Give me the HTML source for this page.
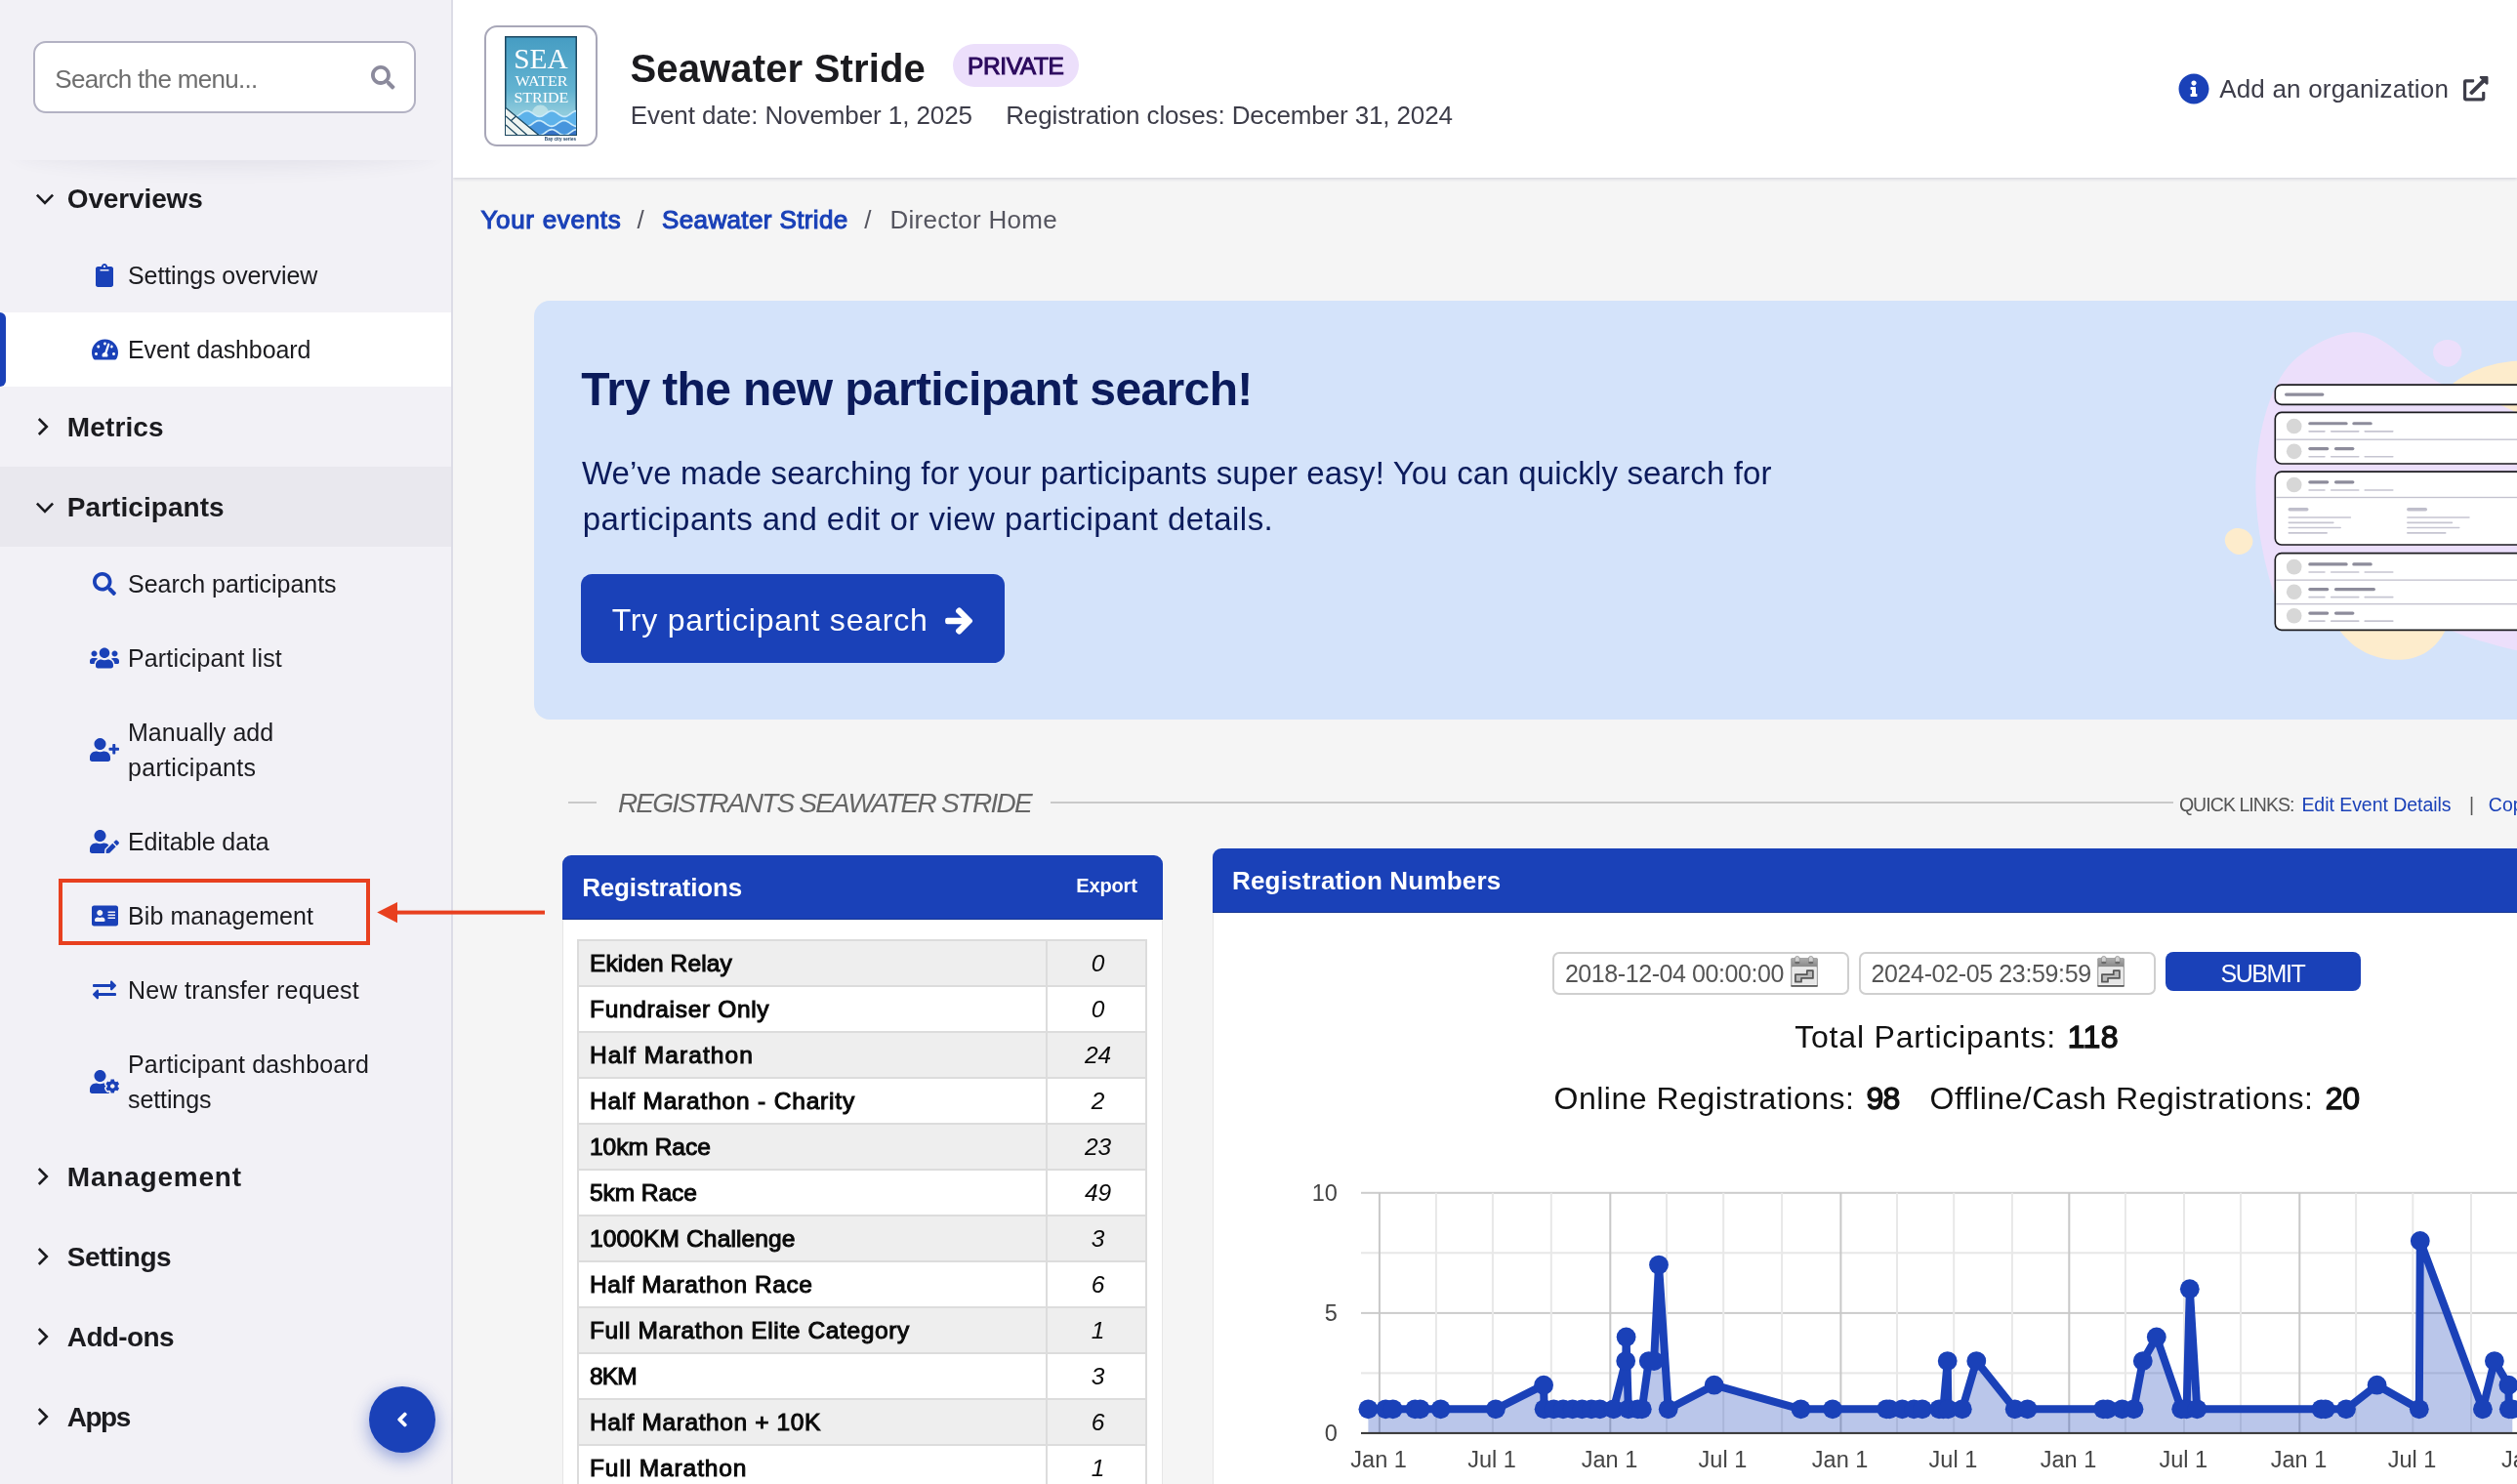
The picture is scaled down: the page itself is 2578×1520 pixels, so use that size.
<!DOCTYPE html><html lang="en"><head><meta charset="utf-8"><title>Seawater Stride - Director Home</title>
<style>
*{box-sizing:border-box;margin:0;padding:0}
html,body{width:2578px;height:1520px;overflow:hidden;background:#f5f5f5;font-family:"Liberation Sans", sans-serif;color:#1b1b1f}
.t{position:absolute;white-space:nowrap;display:block}
.ic{position:absolute;display:block;overflow:visible}
.abs{position:absolute;display:block}
a{text-decoration:none;color:inherit}
ul,li{list-style:none}
</style></head><body><div id="app" style="position:absolute;left:0;top:0;width:2578px;height:1520px;will-change:transform">
<header class="abs" style="left:464px;top:0;width:2114px;height:182px;background:#fff;box-shadow:0 1.5px 3px rgba(50,50,95,.17)">
</header>
<div class="abs" style="left:496px;top:26px;width:116px;height:124px;border:2px solid #a8a7b8;border-radius:13px;background:#fff"></div>
<svg class="ic" style="left:516px;top:36px" width="76" height="112" viewBox="516 36 76 112" font-family="'Liberation Serif', serif">
<defs><linearGradient id="lg1" x1="0" y1="0" x2="0" y2="1"><stop offset="0" stop-color="#469dc3"/><stop offset=".55" stop-color="#63b3d1"/><stop offset=".78" stop-color="#8fcbdc"/><stop offset="1" stop-color="#8fcbdc"/></linearGradient>
<linearGradient id="lg2" x1="0" y1="0" x2="0" y2="1"><stop offset="0" stop-color="#58b2ea"/><stop offset="1" stop-color="#2f66b8"/></linearGradient>
<clipPath id="cp1"><rect x="518" y="38" width="72" height="100"/></clipPath></defs>
<rect x="517" y="37" width="74" height="102" fill="#1d4861"/>
<rect x="518.5" y="38.5" width="71" height="99" fill="url(#lg1)"/>
<g clip-path="url(#cp1)">
<circle cx="553.5" cy="116" r="8.5" fill="#c4e6ea" opacity=".8"/>
<path d="M518.0 114.72 L519.0 115.34 L520.0 116.02 L521.0 116.73 L522.0 117.43 L523.0 118.07 L524.0 118.62 L525.0 119.04 L526.0 119.30 L527.0 119.40 L528.0 119.32 L529.0 119.07 L530.0 118.67 L531.0 118.13 L532.0 117.50 L533.0 116.80 L534.0 116.09 L535.0 115.40 L536.0 114.78 L537.0 114.26 L538.0 113.88 L539.0 113.66 L540.0 113.60 L541.0 113.73 L542.0 114.02 L543.0 114.46 L544.0 115.02 L545.0 115.67 L546.0 116.37 L547.0 117.09 L548.0 117.76 L549.0 118.36 L550.0 118.85 L551.0 119.19 L552.0 119.37 L553.0 119.38 L554.0 119.22 L555.0 118.89 L556.0 118.41 L557.0 117.82 L558.0 117.16 L559.0 116.45 L560.0 115.74 L561.0 115.08 L562.0 114.51 L563.0 114.05 L564.0 113.75 L565.0 113.61 L566.0 113.64 L567.0 113.85 L568.0 114.22 L569.0 114.72 L570.0 115.34 L571.0 116.02 L572.0 116.73 L573.0 117.43 L574.0 118.07 L575.0 118.62 L576.0 119.04 L577.0 119.30 L578.0 119.40 L579.0 119.32 L580.0 119.07 L581.0 118.67 L582.0 118.13 L583.0 117.50 L584.0 116.80 L585.0 116.09 L586.0 115.40 L587.0 114.78 L588.0 114.26 L589.0 113.88 L590.0 113.66 L591.0 113.60 L591 140 L518 140 Z" fill="#5db2ea"/>
<path d="M518.0 114.72 L519.0 115.34 L520.0 116.02 L521.0 116.73 L522.0 117.43 L523.0 118.07 L524.0 118.62 L525.0 119.04 L526.0 119.30 L527.0 119.40 L528.0 119.32 L529.0 119.07 L530.0 118.67 L531.0 118.13 L532.0 117.50 L533.0 116.80 L534.0 116.09 L535.0 115.40 L536.0 114.78 L537.0 114.26 L538.0 113.88 L539.0 113.66 L540.0 113.60 L541.0 113.73 L542.0 114.02 L543.0 114.46 L544.0 115.02 L545.0 115.67 L546.0 116.37 L547.0 117.09 L548.0 117.76 L549.0 118.36 L550.0 118.85 L551.0 119.19 L552.0 119.37 L553.0 119.38 L554.0 119.22 L555.0 118.89 L556.0 118.41 L557.0 117.82 L558.0 117.16 L559.0 116.45 L560.0 115.74 L561.0 115.08 L562.0 114.51 L563.0 114.05 L564.0 113.75 L565.0 113.61 L566.0 113.64 L567.0 113.85 L568.0 114.22 L569.0 114.72 L570.0 115.34 L571.0 116.02 L572.0 116.73 L573.0 117.43 L574.0 118.07 L575.0 118.62 L576.0 119.04 L577.0 119.30 L578.0 119.40 L579.0 119.32 L580.0 119.07 L581.0 118.67 L582.0 118.13 L583.0 117.50 L584.0 116.80 L585.0 116.09 L586.0 115.40 L587.0 114.78 L588.0 114.26 L589.0 113.88 L590.0 113.66 L591.0 113.60" fill="none" stroke="#c9eafa" stroke-width="1.700"/>
<path d="M518.0 127.97 L519.0 127.33 L520.0 126.63 L521.0 125.92 L522.0 125.24 L523.0 124.62 L524.0 124.12 L525.0 123.75 L526.0 123.54 L527.0 123.51 L528.0 123.65 L529.0 123.95 L530.0 124.41 L531.0 124.98 L532.0 125.64 L533.0 126.35 L534.0 127.06 L535.0 127.72 L536.0 128.31 L537.0 128.79 L538.0 129.12 L539.0 129.28 L540.0 129.27 L541.0 129.09 L542.0 128.75 L543.0 128.26 L544.0 127.66 L545.0 126.99 L546.0 126.27 L547.0 125.57 L548.0 124.92 L549.0 124.36 L550.0 123.92 L551.0 123.63 L552.0 123.50 L553.0 123.56 L554.0 123.78 L555.0 124.16 L556.0 124.68 L557.0 125.30 L558.0 125.99 L559.0 126.70 L560.0 127.40 L561.0 128.03 L562.0 128.57 L563.0 128.97 L564.0 129.22 L565.0 129.30 L566.0 129.20 L567.0 128.94 L568.0 128.52 L569.0 127.97 L570.0 127.33 L571.0 126.63 L572.0 125.92 L573.0 125.24 L574.0 124.62 L575.0 124.12 L576.0 123.75 L577.0 123.54 L578.0 123.51 L579.0 123.65 L580.0 123.95 L581.0 124.41 L582.0 124.98 L583.0 125.64 L584.0 126.35 L585.0 127.06 L586.0 127.72 L587.0 128.31 L588.0 128.79 L589.0 129.12 L590.0 129.28 L591.0 129.27 L591 140 L518 140 Z" fill="#4795dd"/>
<path d="M518.0 127.97 L519.0 127.33 L520.0 126.63 L521.0 125.92 L522.0 125.24 L523.0 124.62 L524.0 124.12 L525.0 123.75 L526.0 123.54 L527.0 123.51 L528.0 123.65 L529.0 123.95 L530.0 124.41 L531.0 124.98 L532.0 125.64 L533.0 126.35 L534.0 127.06 L535.0 127.72 L536.0 128.31 L537.0 128.79 L538.0 129.12 L539.0 129.28 L540.0 129.27 L541.0 129.09 L542.0 128.75 L543.0 128.26 L544.0 127.66 L545.0 126.99 L546.0 126.27 L547.0 125.57 L548.0 124.92 L549.0 124.36 L550.0 123.92 L551.0 123.63 L552.0 123.50 L553.0 123.56 L554.0 123.78 L555.0 124.16 L556.0 124.68 L557.0 125.30 L558.0 125.99 L559.0 126.70 L560.0 127.40 L561.0 128.03 L562.0 128.57 L563.0 128.97 L564.0 129.22 L565.0 129.30 L566.0 129.20 L567.0 128.94 L568.0 128.52 L569.0 127.97 L570.0 127.33 L571.0 126.63 L572.0 125.92 L573.0 125.24 L574.0 124.62 L575.0 124.12 L576.0 123.75 L577.0 123.54 L578.0 123.51 L579.0 123.65 L580.0 123.95 L581.0 124.41 L582.0 124.98 L583.0 125.64 L584.0 126.35 L585.0 127.06 L586.0 127.72 L587.0 128.31 L588.0 128.79 L589.0 129.12 L590.0 129.28 L591.0 129.27" fill="none" stroke="#c9eafa" stroke-width="1.700"/>
<path d="M518.0 133.88 L519.0 134.50 L520.0 135.19 L521.0 135.90 L522.0 136.60 L523.0 137.23 L524.0 137.77 L525.0 138.17 L526.0 138.42 L527.0 138.50 L528.0 138.40 L529.0 138.14 L530.0 137.72 L531.0 137.17 L532.0 136.53 L533.0 135.83 L534.0 135.12 L535.0 134.44 L536.0 133.82 L537.0 133.32 L538.0 132.95 L539.0 132.74 L540.0 132.71 L541.0 132.85 L542.0 133.15 L543.0 133.61 L544.0 134.18 L545.0 134.84 L546.0 135.55 L547.0 136.26 L548.0 136.92 L549.0 137.51 L550.0 137.99 L551.0 138.32 L552.0 138.48 L553.0 138.47 L554.0 138.29 L555.0 137.95 L556.0 137.46 L557.0 136.86 L558.0 136.19 L559.0 135.47 L560.0 134.77 L561.0 134.12 L562.0 133.56 L563.0 133.12 L564.0 132.83 L565.0 132.70 L566.0 132.76 L567.0 132.98 L568.0 133.36 L569.0 133.88 L570.0 134.50 L571.0 135.19 L572.0 135.90 L573.0 136.60 L574.0 137.23 L575.0 137.77 L576.0 138.17 L577.0 138.42 L578.0 138.50 L579.0 138.40 L580.0 138.14 L581.0 137.72 L582.0 137.17 L583.0 136.53 L584.0 135.83 L585.0 135.12 L586.0 134.44 L587.0 133.82 L588.0 133.32 L589.0 132.95 L590.0 132.74 L591.0 132.71 L591 140 L518 140 Z" fill="#3672c4"/>
<path d="M518.0 133.88 L519.0 134.50 L520.0 135.19 L521.0 135.90 L522.0 136.60 L523.0 137.23 L524.0 137.77 L525.0 138.17 L526.0 138.42 L527.0 138.50 L528.0 138.40 L529.0 138.14 L530.0 137.72 L531.0 137.17 L532.0 136.53 L533.0 135.83 L534.0 135.12 L535.0 134.44 L536.0 133.82 L537.0 133.32 L538.0 132.95 L539.0 132.74 L540.0 132.71 L541.0 132.85 L542.0 133.15 L543.0 133.61 L544.0 134.18 L545.0 134.84 L546.0 135.55 L547.0 136.26 L548.0 136.92 L549.0 137.51 L550.0 137.99 L551.0 138.32 L552.0 138.48 L553.0 138.47 L554.0 138.29 L555.0 137.95 L556.0 137.46 L557.0 136.86 L558.0 136.19 L559.0 135.47 L560.0 134.77 L561.0 134.12 L562.0 133.56 L563.0 133.12 L564.0 132.83 L565.0 132.70 L566.0 132.76 L567.0 132.98 L568.0 133.36 L569.0 133.88 L570.0 134.50 L571.0 135.19 L572.0 135.90 L573.0 136.60 L574.0 137.23 L575.0 137.77 L576.0 138.17 L577.0 138.42 L578.0 138.50 L579.0 138.40 L580.0 138.14 L581.0 137.72 L582.0 137.17 L583.0 136.53 L584.0 135.83 L585.0 135.12 L586.0 134.44 L587.0 133.82 L588.0 133.32 L589.0 132.95 L590.0 132.74 L591.0 132.71" fill="none" stroke="#c9eafa" stroke-width="1.700"/>
<polygon points="518,110.500 552,138.500 518,138.500" fill="#eef4f1"/>
<path d="M518 110.500 L552 138.500 M518 119 L540 138.500 M518 128 L530 138.500 M528 119.500 L523 124" stroke="#1d4861" stroke-width="1.3" fill="none"/>
</g>
<text x="554" y="69.800" font-size="30" fill="#fff" text-anchor="middle" textLength="55.500" lengthAdjust="spacingAndGlyphs">SEA</text>
<text x="554.600" y="88.200" font-size="14.500" fill="#fff" text-anchor="middle" textLength="54" lengthAdjust="spacingAndGlyphs">WATER</text>
<text x="554.400" y="104.900" font-size="15.500" fill="#fff" text-anchor="middle" textLength="56" lengthAdjust="spacingAndGlyphs">STRIDE</text>
<text x="590" y="144.200" font-size="4.600" font-weight="700" fill="#1d3f63" text-anchor="end" font-family="'Liberation Sans', sans-serif">Bay city series</text>
</svg>
<h1 id="t1" class="t " style="top:44.14px;font-size:40px;line-height:52px;color:#1b1b1f;font-weight:700;letter-spacing:0.162px;left:645.40px;">Seawater Stride</h1>
<div class="abs" style="left:976px;top:45px;width:129px;height:44px;border-radius:22px;background:#ecdffb"></div>
<span id="t2" class="t " style="top:52.21px;font-size:24.5px;line-height:32px;color:#2c0a5e;-webkit-text-stroke:1.03px #2c0a5e;letter-spacing:-0.401px;left:991.00px;">PRIVATE</span>
<span id="t3" class="t " style="top:101.29px;font-size:26px;line-height:34px;color:#3d3d49;letter-spacing:-0.091px;left:645.80px;">Event date: November 1, 2025</span>
<span id="t4" class="t " style="top:101.29px;font-size:26px;line-height:34px;color:#3d3d49;letter-spacing:-0.126px;left:1030.20px;">Registration closes: December 31, 2024</span>
<svg class="ic" style="left:2230.7px;top:75.0px" width="32.0" height="32" viewBox="0 0 512 512" ><path fill="#1a41b8" d="M256 8C119.043 8 8 119.083 8 256c0 136.997 111.043 248 248 248s248-111.003 248-248C504 119.083 392.957 8 256 8zm0 110c23.196 0 42 18.804 42 42s-18.804 42-42 42-42-18.804-42-42 18.804-42 42-42zm56 254c0 6.627-5.373 12-12 12h-88c-6.627 0-12-5.373-12-12v-24c0-6.627 5.373-12 12-12h12v-64h-12c-6.627 0-12-5.373-12-12v-24c0-6.627 5.373-12 12-12h64c6.627 0 12 5.373 12 12v100h12c6.627 0 12 5.373 12 12v24z"/></svg>
<span id="t5" class="t " style="top:73.79px;font-size:26px;line-height:34px;color:#3d3d49;letter-spacing:0.189px;left:2273.20px;">Add an organization</span>
<svg class="ic" style="left:2522.95px;top:77.75px" width="25.5" height="25.5" viewBox="0 0 512 512" ><path fill="#3d3d49" d="M432 320H400a16 16 0 0 0-16 16V448H64V128H208a16 16 0 0 0 16-16V80a16 16 0 0 0-16-16H48A48 48 0 0 0 0 112V464a48 48 0 0 0 48 48H400a48 48 0 0 0 48-48V336A16 16 0 0 0 432 320ZM488 0h-128c-21.370 0-32.050 25.910-17 41l35.730 35.730L135 320.370a24 24 0 0 0 0 34L157.670 377a24 24 0 0 0 34 0L435.280 133.320 471 169c15 15 41 4.500 41-17V24A24 24 0 0 0 488 0Z"/></svg>
<a id="t6" class="t " style="top:207.59px;font-size:26px;line-height:34px;color:#1a41b8;-webkit-text-stroke:1.09px #1a41b8;letter-spacing:0.703px;left:492.40px;">Your events</a>
<span id="t7" class="t " style="top:207.59px;font-size:26px;line-height:34px;color:#55555f;left:652.60px;">/</span>
<a id="t8" class="t " style="top:207.59px;font-size:26px;line-height:34px;color:#1a41b8;-webkit-text-stroke:1.09px #1a41b8;letter-spacing:0.373px;left:678.00px;">Seawater Stride</a>
<span id="t9" class="t " style="top:207.59px;font-size:26px;line-height:34px;color:#55555f;left:885.20px;">/</span>
<span id="t10" class="t " style="top:207.59px;font-size:26px;line-height:34px;color:#55555f;letter-spacing:0.318px;left:911.40px;">Director Home</span>
<section class="abs" style="left:547px;top:308px;width:2100px;height:428.500px;background:#d4e3fa;border-radius:16px"></section>
<h2 id="t11" class="t " style="top:367.67px;font-size:48px;line-height:62px;color:#0b1b5b;font-weight:700;letter-spacing:-0.629px;left:595.30px;">Try the new participant search!</h2>
<span id="t12" class="t " style="top:463.37px;font-size:33px;line-height:43px;color:#0b1b5b;letter-spacing:0.154px;left:595.90px;">We’ve made searching for your participants super easy! You can quickly search for</span>
<span id="t13" class="t " style="top:510.37px;font-size:33px;line-height:43px;color:#0b1b5b;letter-spacing:0.465px;left:596.80px;">participants and edit or view participant details.</span>
<div class="abs" style="left:595px;top:588px;width:434px;height:91px;border-radius:11.5px;background:#1a41b8"></div>
<span id="t14" class="t " style="top:613.81px;font-size:32px;line-height:42px;color:#fff;letter-spacing:0.796px;left:626.70px;">Try participant search</span>
<svg class="ic" style="left:969.27px;top:620.8px" width="26.25" height="30" viewBox="0 0 448 512" ><path fill="#fff" stroke="#fff" stroke-width="30" stroke-linejoin="round" d="M190.500 66.900l22.200-22.200c9.400-9.400 24.600-9.400 33.900 0L441 239c9.400 9.400 9.400 24.600 0 33.900L246.600 467.300c-9.400 9.400-24.600 9.400-33.900 0l-22.200-22.200c-9.500-9.500-9.300-25 .4-34.300L311.400 296H24c-13.300 0-24-10.700-24-24v-32c0-13.300 10.700-24 24-24h287.400L190.900 101.200c-9.800-9.300-10-24.800-.4-34.300z"/></svg>
<svg class="ic" style="left:2240px;top:320px" width="338" height="400" viewBox="0 0 1254 1484"><path d="M630 75 C 720 70 790 140 880 215 C 960 280 1080 330 1254 330 L1254 1285 C 1150 1260 1060 1235 985 1200 L 340 1100 C 290 950 255 780 262 620 C 268 450 320 250 420 170 C 480 120 560 80 630 75 Z" fill="#ecdffb"/><path d="M988 104 C 1015 102 1046 122 1044 152 C 1042 185 1012 210 985 206 C 955 202 930 172 936 142 C 940 120 962 106 988 104 Z" fill="#ecdffb"/><path d="M1254 185 C 1150 190 1060 230 1010 270 L 1254 380 Z" fill="#fdeccc"/><path d="M196 820 C 225 822 252 845 250 872 C 248 900 222 922 194 920 C 170 918 142 890 144 862 C 146 838 170 818 196 820 Z" fill="#fdeccc"/><path d="M575 1200 L 985 1200 C 960 1260 900 1318 810 1320 C 700 1322 620 1270 575 1200 Z" fill="#fdeccc"/><rect x="335" y="275" width="1000" height="75" rx="24" fill="#fff" stroke="#1c1c20" stroke-width="6"/><rect x="371" y="306" width="150" height="12" rx="6" fill="#8d8c9b"/><rect x="335" y="380" width="1000" height="195" rx="24" fill="#fff" stroke="#1c1c20" stroke-width="6"/><rect x="338" y="480.5" width="1000" height="5" fill="#c3c2cf"/><circle cx="407" cy="432" r="29" fill="#d7d7d7"/><rect x="461" y="416" width="150" height="12" rx="6" fill="#8d8c9b"/><rect x="628" y="416" width="76" height="12" rx="6" fill="#8d8c9b"/><rect x="461" y="449" width="65" height="6" rx="3" fill="#c6c5d1"/><rect x="545" y="449" width="110" height="6" rx="3" fill="#c6c5d1"/><rect x="673" y="449" width="112" height="6" rx="3" fill="#c6c5d1"/><circle cx="407" cy="528" r="29" fill="#d7d7d7"/><rect x="461" y="512" width="78" height="12" rx="6" fill="#8d8c9b"/><rect x="560" y="512" width="76" height="12" rx="6" fill="#8d8c9b"/><rect x="461" y="545" width="65" height="6" rx="3" fill="#c6c5d1"/><rect x="545" y="545" width="110" height="6" rx="3" fill="#c6c5d1"/><rect x="673" y="545" width="112" height="6" rx="3" fill="#c6c5d1"/><rect x="335" y="605" width="1000" height="278" rx="24" fill="#fff" stroke="#1c1c20" stroke-width="6"/><rect x="338" y="700.5" width="1000" height="5" fill="#c3c2cf"/><circle cx="407" cy="655" r="29" fill="#d7d7d7"/><rect x="461" y="639" width="78" height="12" rx="6" fill="#8d8c9b"/><rect x="560" y="639" width="76" height="12" rx="6" fill="#8d8c9b"/><rect x="461" y="672" width="65" height="6" rx="3" fill="#c6c5d1"/><rect x="545" y="672" width="110" height="6" rx="3" fill="#c6c5d1"/><rect x="673" y="672" width="112" height="6" rx="3" fill="#c6c5d1"/><rect x="384" y="742" width="78" height="13" rx="6.500" fill="#bfbecb"/><rect x="384" y="776" width="240" height="6" rx="3" fill="#c6c5d1"/><rect x="384" y="796" width="175" height="6" rx="3" fill="#c6c5d1"/><rect x="384" y="815" width="202" height="6" rx="3" fill="#c6c5d1"/><rect x="384" y="835" width="150" height="6" rx="3" fill="#c6c5d1"/><rect x="835" y="742" width="78" height="13" rx="6.500" fill="#bfbecb"/><rect x="835" y="776" width="240" height="6" rx="3" fill="#c6c5d1"/><rect x="835" y="796" width="175" height="6" rx="3" fill="#c6c5d1"/><rect x="835" y="815" width="202" height="6" rx="3" fill="#c6c5d1"/><rect x="835" y="835" width="150" height="6" rx="3" fill="#c6c5d1"/><rect x="335" y="915" width="1000" height="292" rx="24" fill="#fff" stroke="#1c1c20" stroke-width="6"/><rect x="338" y="1014.5" width="1000" height="5" fill="#c3c2cf"/><rect x="338" y="1105.5" width="1000" height="5" fill="#c3c2cf"/><circle cx="407" cy="967" r="29" fill="#d7d7d7"/><rect x="461" y="951" width="150" height="12" rx="6" fill="#8d8c9b"/><rect x="628" y="951" width="76" height="12" rx="6" fill="#8d8c9b"/><rect x="461" y="984" width="65" height="6" rx="3" fill="#c6c5d1"/><rect x="545" y="984" width="110" height="6" rx="3" fill="#c6c5d1"/><rect x="673" y="984" width="112" height="6" rx="3" fill="#c6c5d1"/><circle cx="407" cy="1062" r="29" fill="#d7d7d7"/><rect x="461" y="1046" width="78" height="12" rx="6" fill="#8d8c9b"/><rect x="560" y="1046" width="156" height="12" rx="6" fill="#8d8c9b"/><rect x="461" y="1079" width="65" height="6" rx="3" fill="#c6c5d1"/><rect x="545" y="1079" width="110" height="6" rx="3" fill="#c6c5d1"/><rect x="673" y="1079" width="112" height="6" rx="3" fill="#c6c5d1"/><circle cx="407" cy="1153" r="29" fill="#d7d7d7"/><rect x="461" y="1137" width="78" height="12" rx="6" fill="#8d8c9b"/><rect x="560" y="1137" width="76" height="12" rx="6" fill="#8d8c9b"/><rect x="461" y="1170" width="65" height="6" rx="3" fill="#c6c5d1"/><rect x="545" y="1170" width="110" height="6" rx="3" fill="#c6c5d1"/><rect x="673" y="1170" width="112" height="6" rx="3" fill="#c6c5d1"/></svg>
<div class="abs" style="left:581.500px;top:821px;width:29.500px;height:2px;background:#c9c9c9"></div>
<span id="t15" class="t " style="top:805.10px;font-size:28px;line-height:36px;color:#666;font-style:italic;letter-spacing:-1.796px;left:632.90px;">REGISTRANTS SEAWATER STRIDE</span>
<div class="abs" style="left:1076px;top:821px;width:1150px;height:2px;background:#c9c9c9"></div>
<span id="t16" class="t " style="top:811.84px;font-size:19.5px;line-height:25px;color:#555;letter-spacing:-0.941px;left:2231.90px;">QUICK LINKS:</span>
<a id="t17" class="t " style="top:811.84px;font-size:19.5px;line-height:25px;color:#1a41b8;letter-spacing:-0.047px;left:2357.40px;">Edit Event Details</a>
<span id="t18" class="t " style="top:811.84px;font-size:19.5px;line-height:25px;color:#555;left:2529.00px;">|</span>
<a id="t19" class="t " style="top:811.84px;font-size:19.5px;line-height:25px;color:#1a41b8;left:2548.80px;">Copy Event</a>
<div class="abs" style="left:576px;top:876px;width:615px;height:700px;background:#fff;border:1px solid #e6e6e6;border-radius:9px 9px 0 0"></div>
<div class="abs" style="left:576px;top:876px;width:615px;height:66px;background:#1a41b8;border-bottom:1.5px solid #163692;border-radius:9px 9px 0 0"></div>
<h3 id="t20" class="t " style="top:891.69px;font-size:26px;line-height:34px;color:#fff;font-weight:700;letter-spacing:-0.179px;left:596.20px;">Registrations</h3>
<a id="t21" class="t " style="top:893.57px;font-size:20px;line-height:26px;color:#fff;font-weight:700;letter-spacing:-0.149px;left:1102.30px;">Export</a>
<div class="abs" style="left:591px;top:962px;width:584px;height:620px;background:#dcdcdc"></div>
<div class="abs" style="left:593px;top:964px;width:478px;height:45px;background:#eeeeee"></div>
<div class="abs" style="left:1073px;top:964px;width:100px;height:45px;background:#eeeeee"></div>
<span id="t22" class="t " style="top:971.01px;font-size:24.5px;line-height:32px;color:#0a0a0a;-webkit-text-stroke:1.03px #0a0a0a;letter-spacing:0.122px;left:604.00px;">Ekiden Relay</span>
<span id="t23" class="t " style="top:971.01px;font-size:24.5px;line-height:32px;color:#0a0a0a;font-style:italic;left:1124.6px;transform:translateX(-50%);">0</span>
<div class="abs" style="left:593px;top:1011px;width:478px;height:45px;background:#ffffff"></div>
<div class="abs" style="left:1073px;top:1011px;width:100px;height:45px;background:#ffffff"></div>
<span id="t24" class="t " style="top:1018.01px;font-size:24.5px;line-height:32px;color:#0a0a0a;-webkit-text-stroke:1.03px #0a0a0a;letter-spacing:0.665px;left:604.00px;">Fundraiser Only</span>
<span id="t25" class="t " style="top:1018.01px;font-size:24.5px;line-height:32px;color:#0a0a0a;font-style:italic;left:1124.6px;transform:translateX(-50%);">0</span>
<div class="abs" style="left:593px;top:1058px;width:478px;height:45px;background:#eeeeee"></div>
<div class="abs" style="left:1073px;top:1058px;width:100px;height:45px;background:#eeeeee"></div>
<span id="t26" class="t " style="top:1065.01px;font-size:24.5px;line-height:32px;color:#0a0a0a;-webkit-text-stroke:1.03px #0a0a0a;letter-spacing:1.084px;left:604.00px;">Half Marathon</span>
<span id="t27" class="t " style="top:1065.01px;font-size:24.5px;line-height:32px;color:#0a0a0a;font-style:italic;left:1124.6px;transform:translateX(-50%);">24</span>
<div class="abs" style="left:593px;top:1105px;width:478px;height:45px;background:#ffffff"></div>
<div class="abs" style="left:1073px;top:1105px;width:100px;height:45px;background:#ffffff"></div>
<span id="t28" class="t " style="top:1112.01px;font-size:24.5px;line-height:32px;color:#0a0a0a;-webkit-text-stroke:1.03px #0a0a0a;letter-spacing:0.815px;left:604.00px;">Half Marathon - Charity</span>
<span id="t29" class="t " style="top:1112.01px;font-size:24.5px;line-height:32px;color:#0a0a0a;font-style:italic;left:1124.6px;transform:translateX(-50%);">2</span>
<div class="abs" style="left:593px;top:1152px;width:478px;height:45px;background:#eeeeee"></div>
<div class="abs" style="left:1073px;top:1152px;width:100px;height:45px;background:#eeeeee"></div>
<span id="t30" class="t " style="top:1159.01px;font-size:24.5px;line-height:32px;color:#0a0a0a;-webkit-text-stroke:1.03px #0a0a0a;letter-spacing:-0.015px;left:604.00px;">10km Race</span>
<span id="t31" class="t " style="top:1159.01px;font-size:24.5px;line-height:32px;color:#0a0a0a;font-style:italic;left:1124.6px;transform:translateX(-50%);">23</span>
<div class="abs" style="left:593px;top:1199px;width:478px;height:45px;background:#ffffff"></div>
<div class="abs" style="left:1073px;top:1199px;width:100px;height:45px;background:#ffffff"></div>
<span id="t32" class="t " style="top:1206.01px;font-size:24.5px;line-height:32px;color:#0a0a0a;-webkit-text-stroke:1.03px #0a0a0a;letter-spacing:-0.056px;left:604.00px;">5km Race</span>
<span id="t33" class="t " style="top:1206.01px;font-size:24.5px;line-height:32px;color:#0a0a0a;font-style:italic;left:1124.6px;transform:translateX(-50%);">49</span>
<div class="abs" style="left:593px;top:1246px;width:478px;height:45px;background:#eeeeee"></div>
<div class="abs" style="left:1073px;top:1246px;width:100px;height:45px;background:#eeeeee"></div>
<span id="t34" class="t " style="top:1253.01px;font-size:24.5px;line-height:32px;color:#0a0a0a;-webkit-text-stroke:1.03px #0a0a0a;letter-spacing:0.140px;left:604.00px;">1000KM Challenge</span>
<span id="t35" class="t " style="top:1253.01px;font-size:24.5px;line-height:32px;color:#0a0a0a;font-style:italic;left:1124.6px;transform:translateX(-50%);">3</span>
<div class="abs" style="left:593px;top:1293px;width:478px;height:45px;background:#ffffff"></div>
<div class="abs" style="left:1073px;top:1293px;width:100px;height:45px;background:#ffffff"></div>
<span id="t36" class="t " style="top:1300.01px;font-size:24.5px;line-height:32px;color:#0a0a0a;-webkit-text-stroke:1.03px #0a0a0a;letter-spacing:0.595px;left:604.00px;">Half Marathon Race</span>
<span id="t37" class="t " style="top:1300.01px;font-size:24.5px;line-height:32px;color:#0a0a0a;font-style:italic;left:1124.6px;transform:translateX(-50%);">6</span>
<div class="abs" style="left:593px;top:1340px;width:478px;height:45px;background:#eeeeee"></div>
<div class="abs" style="left:1073px;top:1340px;width:100px;height:45px;background:#eeeeee"></div>
<span id="t38" class="t " style="top:1347.01px;font-size:24.5px;line-height:32px;color:#0a0a0a;-webkit-text-stroke:1.03px #0a0a0a;letter-spacing:0.623px;left:604.00px;">Full Marathon Elite Category</span>
<span id="t39" class="t " style="top:1347.01px;font-size:24.5px;line-height:32px;color:#0a0a0a;font-style:italic;left:1124.6px;transform:translateX(-50%);">1</span>
<div class="abs" style="left:593px;top:1387px;width:478px;height:45px;background:#ffffff"></div>
<div class="abs" style="left:1073px;top:1387px;width:100px;height:45px;background:#ffffff"></div>
<span id="t40" class="t " style="top:1394.01px;font-size:24.5px;line-height:32px;color:#0a0a0a;-webkit-text-stroke:1.03px #0a0a0a;letter-spacing:-0.845px;left:604.00px;">8KM</span>
<span id="t41" class="t " style="top:1394.01px;font-size:24.5px;line-height:32px;color:#0a0a0a;font-style:italic;left:1124.6px;transform:translateX(-50%);">3</span>
<div class="abs" style="left:593px;top:1434px;width:478px;height:45px;background:#eeeeee"></div>
<div class="abs" style="left:1073px;top:1434px;width:100px;height:45px;background:#eeeeee"></div>
<span id="t42" class="t " style="top:1441.01px;font-size:24.5px;line-height:32px;color:#0a0a0a;-webkit-text-stroke:1.03px #0a0a0a;letter-spacing:0.611px;left:604.00px;">Half Marathon + 10K</span>
<span id="t43" class="t " style="top:1441.01px;font-size:24.5px;line-height:32px;color:#0a0a0a;font-style:italic;left:1124.6px;transform:translateX(-50%);">6</span>
<div class="abs" style="left:593px;top:1481px;width:478px;height:45px;background:#ffffff"></div>
<div class="abs" style="left:1073px;top:1481px;width:100px;height:45px;background:#ffffff"></div>
<span id="t44" class="t " style="top:1488.01px;font-size:24.5px;line-height:32px;color:#0a0a0a;-webkit-text-stroke:1.03px #0a0a0a;letter-spacing:0.892px;left:604.00px;">Full Marathon</span>
<span id="t45" class="t " style="top:1488.01px;font-size:24.5px;line-height:32px;color:#0a0a0a;font-style:italic;left:1124.6px;transform:translateX(-50%);">1</span>
<div class="abs" style="left:1242px;top:869px;width:1400px;height:700px;background:#fff;border:1px solid #e6e6e6;border-radius:9px 0 0 0"></div>
<div class="abs" style="left:1242px;top:869px;width:1400px;height:66px;background:#1a41b8;border-bottom:1.5px solid #163692;border-radius:9px 0 0 0"></div>
<h3 id="t46" class="t " style="top:884.99px;font-size:26px;line-height:34px;color:#fff;font-weight:700;letter-spacing:0.189px;left:1262.00px;">Registration Numbers</h3>
<div class="abs" style="left:1590px;top:975px;width:304px;height:44px;border:2px solid #cfcfcf;border-radius:7px;background:#fff"></div>
<div class="abs" style="left:1904px;top:975px;width:304px;height:44px;border:2px solid #cfcfcf;border-radius:7px;background:#fff"></div>
<span id="t47" class="t " style="top:981.44px;font-size:25px;line-height:32px;color:#555;letter-spacing:-0.420px;left:1602.90px;">2018-12-04 00:00:00</span>
<span id="t48" class="t " style="top:981.44px;font-size:25px;line-height:32px;color:#555;letter-spacing:-0.364px;left:1916.50px;">2024-02-05 23:59:59</span>
<svg class="ic" style="left:1834.1px;top:979px" width="28" height="32" viewBox="0 0 28 32"><defs><linearGradient id="cg1" x1="0" y1="0" x2="0" y2="1"><stop offset="0" stop-color="#aaa"/><stop offset="1" stop-color="#878787"/></linearGradient></defs><rect x="0.300" y="2.200" width="27.500" height="29.600" rx="1.200" fill="#8c8c8c"/><rect x="1.200" y="3" width="25.700" height="8.600" fill="url(#cg1)"/><rect x="1.900" y="11.800" width="24.300" height="18" fill="#e6e6e6" stroke="#fafafa" stroke-width="1"/><rect x="0.300" y="29.900" width="27.500" height="1.900" rx=".8" fill="#606060"/><rect x="4.400" y="0.400" width="4.800" height="7" rx="2.400" fill="#cfcfcf" stroke="#8a8a8a" stroke-width=".7"/><rect x="18.400" y="0.400" width="4.800" height="7" rx="2.400" fill="#cfcfcf" stroke="#8a8a8a" stroke-width=".7"/><ellipse cx="6.800" cy="7" rx="2.700" ry="1.300" fill="#6a6a6a"/><ellipse cx="20.800" cy="7" rx="2.700" ry="1.300" fill="#6a6a6a"/><path d="M4.900 19.200 H16.800 V15.200 H22.900 V22.900 H11 V26.700 H4.900 Z" fill="#b9b9b9" stroke="#565656" stroke-width="1.700" stroke-linejoin="round"/></svg>
<svg class="ic" style="left:2148.2px;top:979px" width="28" height="32" viewBox="0 0 28 32"><defs><linearGradient id="cg2" x1="0" y1="0" x2="0" y2="1"><stop offset="0" stop-color="#aaa"/><stop offset="1" stop-color="#878787"/></linearGradient></defs><rect x="0.300" y="2.200" width="27.500" height="29.600" rx="1.200" fill="#8c8c8c"/><rect x="1.200" y="3" width="25.700" height="8.600" fill="url(#cg2)"/><rect x="1.900" y="11.800" width="24.300" height="18" fill="#e6e6e6" stroke="#fafafa" stroke-width="1"/><rect x="0.300" y="29.900" width="27.500" height="1.900" rx=".8" fill="#606060"/><rect x="4.400" y="0.400" width="4.800" height="7" rx="2.400" fill="#cfcfcf" stroke="#8a8a8a" stroke-width=".7"/><rect x="18.400" y="0.400" width="4.800" height="7" rx="2.400" fill="#cfcfcf" stroke="#8a8a8a" stroke-width=".7"/><ellipse cx="6.800" cy="7" rx="2.700" ry="1.300" fill="#6a6a6a"/><ellipse cx="20.800" cy="7" rx="2.700" ry="1.300" fill="#6a6a6a"/><path d="M4.900 19.200 H16.800 V15.200 H22.900 V22.900 H11 V26.700 H4.900 Z" fill="#b9b9b9" stroke="#565656" stroke-width="1.700" stroke-linejoin="round"/></svg>
<div class="abs" style="left:2218px;top:975px;width:200px;height:40px;border-radius:8px;background:#1a41b8"></div>
<span id="t49" class="t " style="top:980.74px;font-size:25px;line-height:32px;color:#fff;letter-spacing:-1.431px;left:2274.40px;">SUBMIT</span>
<span id="t50" class="t " style="top:1040.91px;font-size:32px;line-height:42px;color:#111;letter-spacing:0.802px;left:1838.20px;">Total Participants:</span>
<span id="t51" class="t " style="top:1040.91px;font-size:32px;line-height:42px;color:#111;-webkit-text-stroke:1.34px #111;letter-spacing:0.395px;left:2117.80px;">118</span>
<span id="t52" class="t " style="top:1103.91px;font-size:32px;line-height:42px;color:#111;letter-spacing:0.523px;left:1591.50px;">Online Registrations:</span>
<span id="t53" class="t " style="top:1103.91px;font-size:32px;line-height:42px;color:#111;-webkit-text-stroke:1.34px #111;letter-spacing:-0.889px;left:1911.50px;">98</span>
<span id="t54" class="t " style="top:1103.91px;font-size:32px;line-height:42px;color:#111;letter-spacing:0.468px;left:1976.60px;">Offline/Cash Registrations:</span>
<span id="t55" class="t " style="top:1103.91px;font-size:32px;line-height:42px;color:#111;-webkit-text-stroke:1.34px #111;letter-spacing:-0.189px;left:2381.70px;">20</span>
<svg class="ic" style="left:1300px;top:1190px" width="1278" height="330" viewBox="1300 1190 1278 330" font-family="'Liberation Sans', sans-serif"><rect x="1394" y="1220.8" width="1200" height="2" fill="#cccccc"/><rect x="1394" y="1282.3" width="1200" height="2" fill="#e7e7e7"/><rect x="1394" y="1343.9" width="1200" height="2" fill="#cccccc"/><rect x="1394" y="1405.4" width="1200" height="2" fill="#e7e7e7"/><rect x="1411.9" y="1221.8" width="2" height="246.1" fill="#c8c8c8"/><rect x="1469.9" y="1221.8" width="2" height="246.1" fill="#e8e8e8"/><rect x="1527.9" y="1221.8" width="2" height="246.1" fill="#e8e8e8"/><rect x="1587.8" y="1221.8" width="2" height="246.1" fill="#e8e8e8"/><rect x="1648.3" y="1221.8" width="2" height="246.1" fill="#c8c8c8"/><rect x="1706.0" y="1221.8" width="2" height="246.1" fill="#e8e8e8"/><rect x="1764.2" y="1221.8" width="2" height="246.1" fill="#e8e8e8"/><rect x="1824.1" y="1221.8" width="2" height="246.1" fill="#e8e8e8"/><rect x="1884.4" y="1221.8" width="2" height="246.1" fill="#c8c8c8"/><rect x="1942.0" y="1221.8" width="2" height="246.1" fill="#e8e8e8"/><rect x="2000.2" y="1221.8" width="2" height="246.1" fill="#e8e8e8"/><rect x="2059.9" y="1221.8" width="2" height="246.1" fill="#e8e8e8"/><rect x="2118.3" y="1221.8" width="2" height="246.1" fill="#c8c8c8"/><rect x="2175.9" y="1221.8" width="2" height="246.1" fill="#e8e8e8"/><rect x="2236.0" y="1221.8" width="2" height="246.1" fill="#e8e8e8"/><rect x="2294.0" y="1221.8" width="2" height="246.1" fill="#e8e8e8"/><rect x="2354.3" y="1221.8" width="2" height="246.1" fill="#c8c8c8"/><rect x="2412.1" y="1221.8" width="2" height="246.1" fill="#e8e8e8"/><rect x="2470.3" y="1221.8" width="2" height="246.1" fill="#e8e8e8"/><rect x="2530.0" y="1221.8" width="2" height="246.1" fill="#e8e8e8"/><rect x="2590.6" y="1221.8" width="2" height="246.1" fill="#c8c8c8"/><path d="M1401.4 1467.9 L1401.4 1443.3 L1419.2 1443.3 L1426.7 1443.3 L1449.3 1443.3 L1454.7 1443.3 L1475.6 1443.3 L1531.9 1443.3 L1581.1 1418.7 L1581.6 1443.3 L1591.3 1443.3 L1601 1443.3 L1610.7 1443.3 L1620.4 1443.3 L1630 1443.3 L1638.7 1443.3 L1652.7 1443.3 L1665.2 1394.1 L1665.6 1369.5 L1667.8 1443.3 L1677.5 1443.3 L1681.8 1443.3 L1688.7 1394.1 L1694.1 1394.1 L1699 1295.6 L1708.7 1443.3 L1755.7 1418.7 L1844.5 1443.3 L1877.0 1443.3 L1932.2 1443.3 L1935.4 1443.3 L1948.4 1443.3 L1960.2 1443.3 L1968.9 1443.3 L1986.1 1443.3 L1990.4 1443.3 L1994.7 1394.1 L1995.4 1443.3 L2009.8 1443.3 L2024.3 1394.1 L2063.7 1443.3 L2076.6 1443.3 L2154.2 1443.3 L2158.6 1443.3 L2173.6 1443.3 L2185.5 1443.3 L2194.8 1394.1 L2208.8 1369.5 L2234.2 1443.3 L2239.6 1443.3 L2242.8 1320.2 L2250.3 1443.3 L2377.5 1443.3 L2381.8 1443.3 L2403 1443.3 L2434.6 1418.7 L2477.8 1443.3 L2478.8 1271.0 L2542.9 1443.3 L2554.9 1394.1 L2569.4 1418.7 L2569.8 1443.3 L2573.3 1443.3 L2573.3 1467.9 Z" fill="#1a41b8" fill-opacity=".3"/><rect x="1394" y="1466.9" width="1200" height="2" fill="#333"/><path d="M1401.4 1443.3 L1419.2 1443.3 L1426.7 1443.3 L1449.3 1443.3 L1454.7 1443.3 L1475.6 1443.3 L1531.9 1443.3 L1581.1 1418.7 L1581.6 1443.3 L1591.3 1443.3 L1601 1443.3 L1610.7 1443.3 L1620.4 1443.3 L1630 1443.3 L1638.7 1443.3 L1652.7 1443.3 L1665.2 1394.1 L1665.6 1369.5 L1667.8 1443.3 L1677.5 1443.3 L1681.8 1443.3 L1688.7 1394.1 L1694.1 1394.1 L1699 1295.6 L1708.7 1443.3 L1755.7 1418.7 L1844.5 1443.3 L1877.0 1443.3 L1932.2 1443.3 L1935.4 1443.3 L1948.4 1443.3 L1960.2 1443.3 L1968.9 1443.3 L1986.1 1443.3 L1990.4 1443.3 L1994.7 1394.1 L1995.4 1443.3 L2009.8 1443.3 L2024.3 1394.1 L2063.7 1443.3 L2076.6 1443.3 L2154.2 1443.3 L2158.6 1443.3 L2173.6 1443.3 L2185.5 1443.3 L2194.8 1394.1 L2208.8 1369.5 L2234.2 1443.3 L2239.6 1443.3 L2242.8 1320.2 L2250.3 1443.3 L2377.5 1443.3 L2381.8 1443.3 L2403 1443.3 L2434.6 1418.7 L2477.8 1443.3 L2478.8 1271.0 L2542.9 1443.3 L2554.9 1394.1 L2569.4 1418.7 L2569.8 1443.3 L2573.3 1443.3" fill="none" stroke="#1a41b8" stroke-width="8" stroke-linejoin="round"/><circle cx="1401.4" cy="1443.3" r="9.900" fill="#1a41b8"/><circle cx="1419.2" cy="1443.3" r="9.900" fill="#1a41b8"/><circle cx="1426.7" cy="1443.3" r="9.900" fill="#1a41b8"/><circle cx="1449.3" cy="1443.3" r="9.900" fill="#1a41b8"/><circle cx="1454.7" cy="1443.3" r="9.900" fill="#1a41b8"/><circle cx="1475.6" cy="1443.3" r="9.900" fill="#1a41b8"/><circle cx="1531.9" cy="1443.3" r="9.900" fill="#1a41b8"/><circle cx="1581.1" cy="1418.7" r="9.900" fill="#1a41b8"/><circle cx="1581.6" cy="1443.3" r="9.900" fill="#1a41b8"/><circle cx="1591.3" cy="1443.3" r="9.900" fill="#1a41b8"/><circle cx="1601" cy="1443.3" r="9.900" fill="#1a41b8"/><circle cx="1610.7" cy="1443.3" r="9.900" fill="#1a41b8"/><circle cx="1620.4" cy="1443.3" r="9.900" fill="#1a41b8"/><circle cx="1630" cy="1443.3" r="9.900" fill="#1a41b8"/><circle cx="1638.7" cy="1443.3" r="9.900" fill="#1a41b8"/><circle cx="1652.7" cy="1443.3" r="9.900" fill="#1a41b8"/><circle cx="1665.2" cy="1394.1" r="9.900" fill="#1a41b8"/><circle cx="1665.6" cy="1369.5" r="9.900" fill="#1a41b8"/><circle cx="1667.8" cy="1443.3" r="9.900" fill="#1a41b8"/><circle cx="1677.5" cy="1443.3" r="9.900" fill="#1a41b8"/><circle cx="1681.8" cy="1443.3" r="9.900" fill="#1a41b8"/><circle cx="1688.7" cy="1394.1" r="9.900" fill="#1a41b8"/><circle cx="1694.1" cy="1394.1" r="9.900" fill="#1a41b8"/><circle cx="1699" cy="1295.6" r="9.900" fill="#1a41b8"/><circle cx="1708.7" cy="1443.3" r="9.900" fill="#1a41b8"/><circle cx="1755.7" cy="1418.7" r="9.900" fill="#1a41b8"/><circle cx="1844.5" cy="1443.3" r="9.900" fill="#1a41b8"/><circle cx="1877.0" cy="1443.3" r="9.900" fill="#1a41b8"/><circle cx="1932.2" cy="1443.3" r="9.900" fill="#1a41b8"/><circle cx="1935.4" cy="1443.3" r="9.900" fill="#1a41b8"/><circle cx="1948.4" cy="1443.3" r="9.900" fill="#1a41b8"/><circle cx="1960.2" cy="1443.3" r="9.900" fill="#1a41b8"/><circle cx="1968.9" cy="1443.3" r="9.900" fill="#1a41b8"/><circle cx="1986.1" cy="1443.3" r="9.900" fill="#1a41b8"/><circle cx="1990.4" cy="1443.3" r="9.900" fill="#1a41b8"/><circle cx="1994.7" cy="1394.1" r="9.900" fill="#1a41b8"/><circle cx="1995.4" cy="1443.3" r="9.900" fill="#1a41b8"/><circle cx="2009.8" cy="1443.3" r="9.900" fill="#1a41b8"/><circle cx="2024.3" cy="1394.1" r="9.900" fill="#1a41b8"/><circle cx="2063.7" cy="1443.3" r="9.900" fill="#1a41b8"/><circle cx="2076.6" cy="1443.3" r="9.900" fill="#1a41b8"/><circle cx="2154.2" cy="1443.3" r="9.900" fill="#1a41b8"/><circle cx="2158.6" cy="1443.3" r="9.900" fill="#1a41b8"/><circle cx="2173.6" cy="1443.3" r="9.900" fill="#1a41b8"/><circle cx="2185.5" cy="1443.3" r="9.900" fill="#1a41b8"/><circle cx="2194.8" cy="1394.1" r="9.900" fill="#1a41b8"/><circle cx="2208.8" cy="1369.5" r="9.900" fill="#1a41b8"/><circle cx="2234.2" cy="1443.3" r="9.900" fill="#1a41b8"/><circle cx="2239.6" cy="1443.3" r="9.900" fill="#1a41b8"/><circle cx="2242.8" cy="1320.2" r="9.900" fill="#1a41b8"/><circle cx="2250.3" cy="1443.3" r="9.900" fill="#1a41b8"/><circle cx="2377.5" cy="1443.3" r="9.900" fill="#1a41b8"/><circle cx="2381.8" cy="1443.3" r="9.900" fill="#1a41b8"/><circle cx="2403" cy="1443.3" r="9.900" fill="#1a41b8"/><circle cx="2434.6" cy="1418.7" r="9.900" fill="#1a41b8"/><circle cx="2477.8" cy="1443.3" r="9.900" fill="#1a41b8"/><circle cx="2478.8" cy="1271.0" r="9.900" fill="#1a41b8"/><circle cx="2542.9" cy="1443.3" r="9.900" fill="#1a41b8"/><circle cx="2554.9" cy="1394.1" r="9.900" fill="#1a41b8"/><circle cx="2569.4" cy="1418.7" r="9.900" fill="#1a41b8"/><circle cx="2569.8" cy="1443.3" r="9.900" fill="#1a41b8"/><circle cx="2573.3" cy="1443.3" r="9.900" fill="#1a41b8"/><text x="1369.800" y="1230.2" font-size="23.500" fill="#444" text-anchor="end">10</text><text x="1369.800" y="1353.3" font-size="23.500" fill="#444" text-anchor="end">5</text><text x="1369.800" y="1476.3" font-size="23.500" fill="#444" text-anchor="end">0</text><text x="1412.1" y="1502.500" font-size="23.500" fill="#444" text-anchor="middle">Jan 1</text><text x="1528.1" y="1502.500" font-size="23.500" fill="#444" text-anchor="middle">Jul 1</text><text x="1648.5" y="1502.500" font-size="23.500" fill="#444" text-anchor="middle">Jan 1</text><text x="1764.4" y="1502.500" font-size="23.500" fill="#444" text-anchor="middle">Jul 1</text><text x="1884.6" y="1502.500" font-size="23.500" fill="#444" text-anchor="middle">Jan 1</text><text x="2000.4" y="1502.500" font-size="23.500" fill="#444" text-anchor="middle">Jul 1</text><text x="2118.5" y="1502.500" font-size="23.500" fill="#444" text-anchor="middle">Jan 1</text><text x="2236.2" y="1502.500" font-size="23.500" fill="#444" text-anchor="middle">Jul 1</text><text x="2354.5" y="1502.500" font-size="23.500" fill="#444" text-anchor="middle">Jan 1</text><text x="2470.5" y="1502.500" font-size="23.500" fill="#444" text-anchor="middle">Jul 1</text><text x="2590.8" y="1502.500" font-size="23.500" fill="#444" text-anchor="middle">Jan 1</text></svg>
<nav class="abs" style="left:0;top:0;width:464px;height:1520px;background:#f2f1f6;border-right:2px solid #dcdce6">
<div class="abs" style="left:12px;top:100px;width:438px;height:64px;border-radius:0 0 50% 50%/0 0 24px 24px;box-shadow:0 12px 20px -4px rgba(60,60,100,.075)"></div>
<div class="abs" style="left:0;top:0;width:462px;height:164px;background:#f2f1f6"></div>
<div class="abs" style="left:34px;top:42px;width:392px;height:74px;border:2px solid #b3b2c3;border-radius:13px;background:#fff"></div>
<span id="t56" class="t " style="top:63.59px;font-size:26px;line-height:34px;color:#6e6e6e;letter-spacing:-0.688px;left:56.30px;">Search the menu...</span>
<svg class="ic" style="left:379.55px;top:66.95px" width="24.5" height="24.5" viewBox="0 0 512 512" ><path fill="#8b8a9c" d="M505 442.7L405.3 343c-4.5-4.5-10.600-7-17-7H372c27.600-35.300 44-79.700 44-128C416 93.100 322.900 0 208 0S0 93.100 0 208s93.100 208 208 208c48.300 0 92.700-16.400 128-44v16.300c0 6.400 2.500 12.500 7 17l99.700 99.700c9.400 9.400 24.600 9.400 33.900 0l28.300-28.300c9.400-9.400 9.400-24.600.1-34zM208 336c-70.700 0-128-57.200-128-128 0-70.700 57.200-128 128-128 70.700 0 128 57.200 128 128 0 70.700-57.200 128-128 128z"/></svg>
<div class="abs" style="left:0;top:320px;width:462px;height:76px;background:#fff"></div>
<div class="abs" style="left:0;top:320px;width:6px;height:76px;background:#1a41b8;border-radius:0 6px 6px 0"></div>
<div class="abs" style="left:0;top:478px;width:462px;height:82px;background:#e9e8ee"></div>
<span id="t57" class="t " style="top:186.30px;font-size:28px;line-height:36px;color:#1b1b1f;font-weight:700;letter-spacing:-0.138px;left:68.80px;">Overviews</span>
<svg class="ic" style="left:34.5px;top:196.2px" width="22" height="16" viewBox="-11 -8 22 16"><polyline points="-8.1,-4.4 0,3.8 8.1,-4.4" fill="none" stroke="#1b1b1f" stroke-width="2.6"/></svg>
<span id="t58" class="t " style="top:419.80px;font-size:28px;line-height:36px;color:#1b1b1f;font-weight:700;letter-spacing:0.126px;left:68.80px;">Metrics</span>
<svg class="ic" style="left:36.2px;top:425.6px" width="16" height="22" viewBox="-8 -11 16 22"><polyline points="-4.2,-8 3.8,0 -4.2,8" fill="none" stroke="#1b1b1f" stroke-width="2.6"/></svg>
<span id="t59" class="t " style="top:502.30px;font-size:28px;line-height:36px;color:#1b1b1f;font-weight:700;letter-spacing:0.048px;left:68.80px;">Participants</span>
<svg class="ic" style="left:34.5px;top:512.2px" width="22" height="16" viewBox="-11 -8 22 16"><polyline points="-8.1,-4.4 0,3.8 8.1,-4.4" fill="none" stroke="#1b1b1f" stroke-width="2.6"/></svg>
<span id="t60" class="t " style="top:1188.10px;font-size:28px;line-height:36px;color:#1b1b1f;font-weight:700;letter-spacing:0.794px;left:68.80px;">Management</span>
<svg class="ic" style="left:36.2px;top:1193.8999999999999px" width="16" height="22" viewBox="-8 -11 16 22"><polyline points="-4.2,-8 3.8,0 -4.2,8" fill="none" stroke="#1b1b1f" stroke-width="2.6"/></svg>
<span id="t61" class="t " style="top:1270.10px;font-size:28px;line-height:36px;color:#1b1b1f;font-weight:700;letter-spacing:-0.523px;left:68.80px;">Settings</span>
<svg class="ic" style="left:36.2px;top:1275.8999999999999px" width="16" height="22" viewBox="-8 -11 16 22"><polyline points="-4.2,-8 3.8,0 -4.2,8" fill="none" stroke="#1b1b1f" stroke-width="2.6"/></svg>
<span id="t62" class="t " style="top:1351.80px;font-size:28px;line-height:36px;color:#1b1b1f;font-weight:700;letter-spacing:-0.638px;left:68.80px;">Add-ons</span>
<svg class="ic" style="left:36.2px;top:1357.6px" width="16" height="22" viewBox="-8 -11 16 22"><polyline points="-4.2,-8 3.8,0 -4.2,8" fill="none" stroke="#1b1b1f" stroke-width="2.6"/></svg>
<span id="t63" class="t " style="top:1433.80px;font-size:28px;line-height:36px;color:#1b1b1f;font-weight:700;letter-spacing:-1.499px;left:68.80px;">Apps</span>
<svg class="ic" style="left:36.2px;top:1439.6px" width="16" height="22" viewBox="-8 -11 16 22"><polyline points="-4.2,-8 3.8,0 -4.2,8" fill="none" stroke="#1b1b1f" stroke-width="2.6"/></svg>
<svg class="ic" style="left:98.0px;top:270.0px" width="18.0" height="24" viewBox="0 0 384 512" ><path fill="#1a41b8" d="M384 112v352c0 26.510-21.490 48-48 48H48c-26.510 0-48-21.490-48-48V112c0-26.510 21.490-48 48-48h80c0-35.290 28.710-64 64-64s64 28.710 64 64h80c26.510 0 48 21.490 48 48zM192 40c-13.255 0-24 10.745-24 24s10.745 24 24 24 24-10.745 24-24-10.745-24-24-24m96 114v-20a6 6 0 0 0-6-6H102a6 6 0 0 0-6 6v20a6 6 0 0 0 6 6h180a6 6 0 0 0 6-6z"/></svg>
<span id="t64" class="t " style="top:266.14px;font-size:25px;line-height:32px;color:#1b1b1f;letter-spacing:-0.101px;left:131.00px;">Settings overview</span>
<svg class="ic" style="left:93.5px;top:346.0px" width="27.0" height="24" viewBox="0 0 576 512" ><path fill="#1a41b8" d="M288 32C128.940 32 0 160.940 0 320c0 52.800 14.250 102.260 39.060 144.800 5.610 9.620 16.300 15.200 27.440 15.200h443c11.140 0 21.830-5.580 27.440-15.200C561.750 422.260 576 372.800 576 320c0-159.060-128.940-288-288-288zm0 64c14.710 0 26.580 10.130 30.320 23.650-1.110 2.260-2.640 4.230-3.450 6.670l-9.220 27.670c-5.130 3.490-10.970 6.010-17.640 6.010-17.670 0-32-14.330-32-32S270.330 96 288 96zM96 384c-17.670 0-32-14.330-32-32s14.330-32 32-32 32 14.330 32 32-14.330 32-32 32zm48-160c-17.670 0-32-14.330-32-32s14.330-32 32-32 32 14.330 32 32-14.330 32-32 32zm246.770-72.410l-61.330 184C343.130 347.330 352 364.540 352 384c0 11.720-3.380 22.550-8.880 32H232.880c-5.500-9.450-8.880-20.280-8.880-32 0-33.940 26.500-61.430 59.900-63.590l61.340-184.010c4.170-12.560 17.730-19.450 30.360-15.170 12.570 4.190 19.350 17.790 15.170 30.360zm14.660 57.200l15.520-46.550c3.470-1.290 7.130-2.230 11.050-2.230 17.670 0 32 14.330 32 32s-14.330 32-32 32c-11.380-.010-20.890-6.280-26.570-15.220zM480 384c-17.670 0-32-14.330-32-32s14.330-32 32-32 32 14.330 32 32-14.330 32-32 32z"/></svg>
<span id="t65" class="t " style="top:342.14px;font-size:25px;line-height:32px;color:#1b1b1f;letter-spacing:-0.123px;left:131.00px;">Event dashboard</span>
<svg class="ic" style="left:95.0px;top:586.0px" width="24.0" height="24" viewBox="0 0 512 512" ><path fill="#1a41b8" d="M505 442.7L405.3 343c-4.5-4.5-10.600-7-17-7H372c27.600-35.300 44-79.700 44-128C416 93.100 322.900 0 208 0S0 93.100 0 208s93.100 208 208 208c48.300 0 92.700-16.400 128-44v16.300c0 6.400 2.500 12.500 7 17l99.700 99.700c9.400 9.400 24.600 9.400 33.900 0l28.300-28.300c9.400-9.400 9.400-24.600.1-34zM208 336c-70.700 0-128-57.200-128-128 0-70.700 57.200-128 128-128 70.700 0 128 57.200 128 128 0 70.700-57.200 128-128 128z"/></svg>
<span id="t66" class="t " style="top:582.14px;font-size:25px;line-height:32px;color:#1b1b1f;letter-spacing:-0.023px;left:131.00px;">Search participants</span>
<svg class="ic" style="left:92.0px;top:662.0px" width="30.0" height="24" viewBox="0 0 640 512" ><path fill="#1a41b8" d="M96 224c35.300 0 64-28.700 64-64s-28.700-64-64-64-64 28.700-64 64 28.700 64 64 64zm448 0c35.300 0 64-28.700 64-64s-28.700-64-64-64-64 28.700-64 64 28.700 64 64 64zm32 32h-64c-17.600 0-33.500 7.100-45.100 18.600 40.300 22.100 68.900 62 75.100 109.400h66c17.700 0 32-14.300 32-32v-32c0-35.300-28.700-64-64-64zm-256 0c61.900 0 112-50.100 112-112S381.900 32 320 32 208 82.100 208 144s50.100 112 112 112zm76.800 32h-8.300c-20.800 10-43.900 16-68.500 16s-47.600-6-68.500-16h-8.300C179.600 288 128 339.600 128 403.200V432c0 26.500 21.500 48 48 48h288c26.500 0 48-21.500 48-48v-28.800c0-63.600-51.600-115.200-115.200-115.200zm-223.700-13.400C161.500 263.100 145.600 256 128 256H64c-35.300 0-64 28.700-64 64v32c0 17.700 14.300 32 32 32h65.900c6.300-47.400 34.900-87.300 75.200-109.400z"/></svg>
<span id="t67" class="t " style="top:658.14px;font-size:25px;line-height:32px;color:#1b1b1f;letter-spacing:0.145px;left:131.00px;">Participant list</span>
<svg class="ic" style="left:92.0px;top:756.0px" width="30.0" height="24" viewBox="0 0 640 512" ><path fill="#1a41b8" d="M624 208h-64v-64c0-8.800-7.200-16-16-16h-32c-8.800 0-16 7.200-16 16v64h-64c-8.800 0-16 7.200-16 16v32c0 8.800 7.200 16 16 16h64v64c0 8.800 7.200 16 16 16h32c8.800 0 16-7.200 16-16v-64h64c8.800 0 16-7.200 16-16v-32c0-8.800-7.200-16-16-16zm-400 48c70.700 0 128-57.300 128-128S294.700 0 224 0 96 57.300 96 128s57.300 128 128 128zm89.600 32h-16.700c-22.200 10.200-46.900 16-72.900 16s-50.600-5.800-72.900-16h-16.700C60.200 288 0 348.200 0 422.400V464c0 26.500 21.500 48 48 48h352c26.500 0 48-21.500 48-48v-41.600c0-74.200-60.200-134.400-134.400-134.400z"/></svg>
<span id="t68" class="t " style="top:734.24px;font-size:25px;line-height:32px;color:#1b1b1f;letter-spacing:0.044px;left:131.00px;">Manually add</span>
<span id="t69" class="t " style="top:769.84px;font-size:25px;line-height:32px;color:#1b1b1f;letter-spacing:0.286px;left:131.00px;">participants</span>
<svg class="ic" style="left:92.0px;top:850.0px" width="30.0" height="24" viewBox="0 0 640 512" ><path fill="#1a41b8" d="M224 256c70.700 0 128-57.300 128-128S294.700 0 224 0 96 57.300 96 128s57.300 128 128 128zm89.600 32h-16.700c-22.200 10.200-46.900 16-72.900 16s-50.600-5.800-72.900-16h-16.700C60.200 288 0 348.200 0 422.400V464c0 26.500 21.500 48 48 48h274.900c-2.400-6.800-3.400-14-2.600-21.300l6.800-60.900 1.200-11.100 7.900-7.900 77.300-77.300c-24.500-27.700-60-45.500-99.900-45.500zm45.300 145.300l-6.800 61c-1.100 10.200 7.500 18.800 17.600 17.600l60.900-6.800 137.900-137.900-71.700-71.700-137.900 137.800zM633 268.900L595.100 231c-9.300-9.300-24.500-9.300-33.800 0l-37.800 37.800-4.100 4.100 71.800 71.700 41.800-41.800c9.300-9.400 9.300-24.500 0-33.900z"/></svg>
<span id="t70" class="t " style="top:846.14px;font-size:25px;line-height:32px;color:#1b1b1f;letter-spacing:-0.106px;left:131.00px;">Editable data</span>
<svg class="ic" style="left:93.5px;top:926.0px" width="27.0" height="24" viewBox="0 0 576 512" ><path fill="#1a41b8" d="M528 32H48C21.500 32 0 53.500 0 80v352c0 26.500 21.500 48 48 48h480c26.500 0 48-21.500 48-48V80c0-26.500-21.500-48-48-48zm-352 96c35.300 0 64 28.700 64 64s-28.700 64-64 64-64-28.700-64-64 28.700-64 64-64zm112 236.800c0 10.600-10 19.200-22.400 19.200H86.400C74 384 64 375.400 64 364.800v-19.200c0-31.800 30.100-57.600 67.200-57.600h5c12.300 5.100 25.700 8 39.800 8s27.600-2.900 39.800-8h5c37.100 0 67.200 25.800 67.200 57.600v19.200zM512 312c0 4.400-3.600 8-8 8H360c-4.400 0-8-3.600-8-8v-16c0-4.400 3.600-8 8-8h144c4.400 0 8 3.600 8 8v16zm0-64c0 4.400-3.600 8-8 8H360c-4.400 0-8-3.600-8-8v-16c0-4.400 3.600-8 8-8h144c4.400 0 8 3.600 8 8v16zm0-64c0 4.400-3.600 8-8 8H360c-4.400 0-8-3.600-8-8v-16c0-4.400 3.600-8 8-8h144c4.400 0 8 3.600 8 8v16z"/></svg>
<span id="t71" class="t " style="top:922.14px;font-size:25px;line-height:32px;color:#1b1b1f;letter-spacing:0.075px;left:131.00px;">Bib management</span>
<svg class="ic" style="left:95.0px;top:1002.0px" width="24.0" height="24" viewBox="0 0 512 512" ><path fill="#1a41b8" d="M0 168v-16c0-13.255 10.745-24 24-24h360V80c0-21.367 25.899-32.042 40.971-16.971l80 80c9.372 9.373 9.372 24.569 0 33.941l-80 80C409.956 271.982 384 261.456 384 240v-48H24c-13.255 0-24-10.745-24-24zm488 152H128v-48c0-21.314-25.862-32.080-40.971-16.971l-80 80c-9.372 9.373-9.372 24.569 0 33.941l80 80C102.057 463.997 128 453.437 128 432v-48h360c13.255 0 24-10.745 24-24v-16c0-13.255-10.745-24-24-24z"/></svg>
<span id="t72" class="t " style="top:998.14px;font-size:25px;line-height:32px;color:#1b1b1f;letter-spacing:0.250px;left:131.00px;">New transfer request</span>
<svg class="ic" style="left:92.0px;top:1096.0px" width="30.0" height="24" viewBox="0 0 640 512" ><path fill="#1a41b8" d="M610.500 373.300c2.600-14.100 2.600-28.500 0-42.600l25.800-14.900c3-1.700 4.300-5.200 3.300-8.500-6.700-21.600-18.200-41.200-33.200-57.400-2.300-2.500-6-3.100-9-1.400l-25.800 14.900c-10.900-9.300-23.400-16.500-36.900-21.300v-29.800c0-3.400-2.400-6.400-5.700-7.100-22.300-5-45-4.800-66.200 0-3.300.7-5.700 3.700-5.700 7.100v29.800c-13.500 4.800-26 12-36.900 21.300l-25.800-14.900c-2.900-1.700-6.700-1.100-9 1.400-15 16.200-26.500 35.800-33.200 57.400-1 3.300.4 6.800 3.300 8.500l25.800 14.900c-2.600 14.100-2.600 28.500 0 42.600l-25.800 14.900c-3 1.700-4.300 5.200-3.300 8.500 6.700 21.600 18.200 41.100 33.200 57.400 2.300 2.500 6 3.100 9 1.400l25.800-14.900c10.900 9.300 23.400 16.500 36.900 21.300v29.800c0 3.400 2.400 6.400 5.700 7.100 22.300 5 45 4.800 66.200 0 3.300-.7 5.700-3.700 5.700-7.100v-29.800c13.500-4.800 26-12 36.900-21.300l25.800 14.900c2.900 1.700 6.700 1.100 9-1.400 15-16.200 26.500-35.800 33.200-57.400 1-3.300-.4-6.800-3.300-8.500l-25.800-14.900zM496 400.500c-26.800 0-48.500-21.800-48.500-48.500s21.800-48.500 48.500-48.500 48.500 21.800 48.500 48.500-21.700 48.500-48.500 48.500zM224 256c70.700 0 128-57.300 128-128S294.700 0 224 0 96 57.300 96 128s57.300 128 128 128zm201.200 226.500c-2.300-1.200-4.600-2.600-6.800-3.900l-7.900 4.600c-6 3.400-12.800 5.300-19.600 5.300-10.900 0-21.400-4.600-28.900-12.600-18.300-19.800-32.300-43.900-40.200-69.600-5.500-17.700 1.900-36.400 17.900-45.700l7.900-4.600c-.1-2.600-.1-5.200 0-7.800l-7.900-4.600c-16-9.200-23.400-28-17.900-45.700.9-2.900 2.200-5.800 3.200-8.700-3.800-.3-7.500-1.200-11.400-1.200h-16.700c-22.200 10.200-46.900 16-72.900 16s-50.600-5.800-72.900-16h-16.700C60.200 288 0 348.200 0 422.400V464c0 26.500 21.500 48 48 48h352c10.100 0 19.500-3.200 27.200-8.500-1.200-3.800-2-7.700-2-11.800v-9.200z"/></svg>
<span id="t73" class="t " style="top:1074.24px;font-size:25px;line-height:32px;color:#1b1b1f;letter-spacing:0.179px;left:131.00px;">Participant dashboard</span>
<span id="t74" class="t " style="top:1109.84px;font-size:25px;line-height:32px;color:#1b1b1f;letter-spacing:-0.096px;left:131.00px;">settings</span>
<div class="abs" style="left:378px;top:1420px;width:68px;height:68px;border-radius:50%;background:#1a41b8;box-shadow:0 6px 18px rgba(27,63,184,.45)"></div>
<svg class="ic" style="left:407.3px;top:1446.2px" width="10.0" height="16" viewBox="0 0 320 512" ><path fill="#fff" stroke="#fff" stroke-width="40" stroke-linejoin="round" d="M34.520 239.030L228.870 44.690c9.370-9.370 24.570-9.370 33.940 0l22.670 22.670c9.360 9.360 9.370 24.520.04 33.900L131.490 256l154.020 154.750c9.340 9.380 9.320 24.540-.04 33.900l-22.670 22.670c-9.370 9.370-24.570 9.370-33.940 0L34.520 272.970c-9.370-9.370-9.370-24.570 0-33.940z"/></svg>
</nav>
<div class="abs" style="left:60px;top:900px;width:319px;height:68px;border:4px solid #e8401f"></div>
<svg class="ic" style="left:380px;top:915px" width="190" height="40" viewBox="380 915 190 40"><rect x="405" y="932.6" width="153" height="4" fill="#e8401f"/><polygon points="386.2,934.6 407,924 407,945.2" fill="#e8401f"/></svg>
</div></body></html>
